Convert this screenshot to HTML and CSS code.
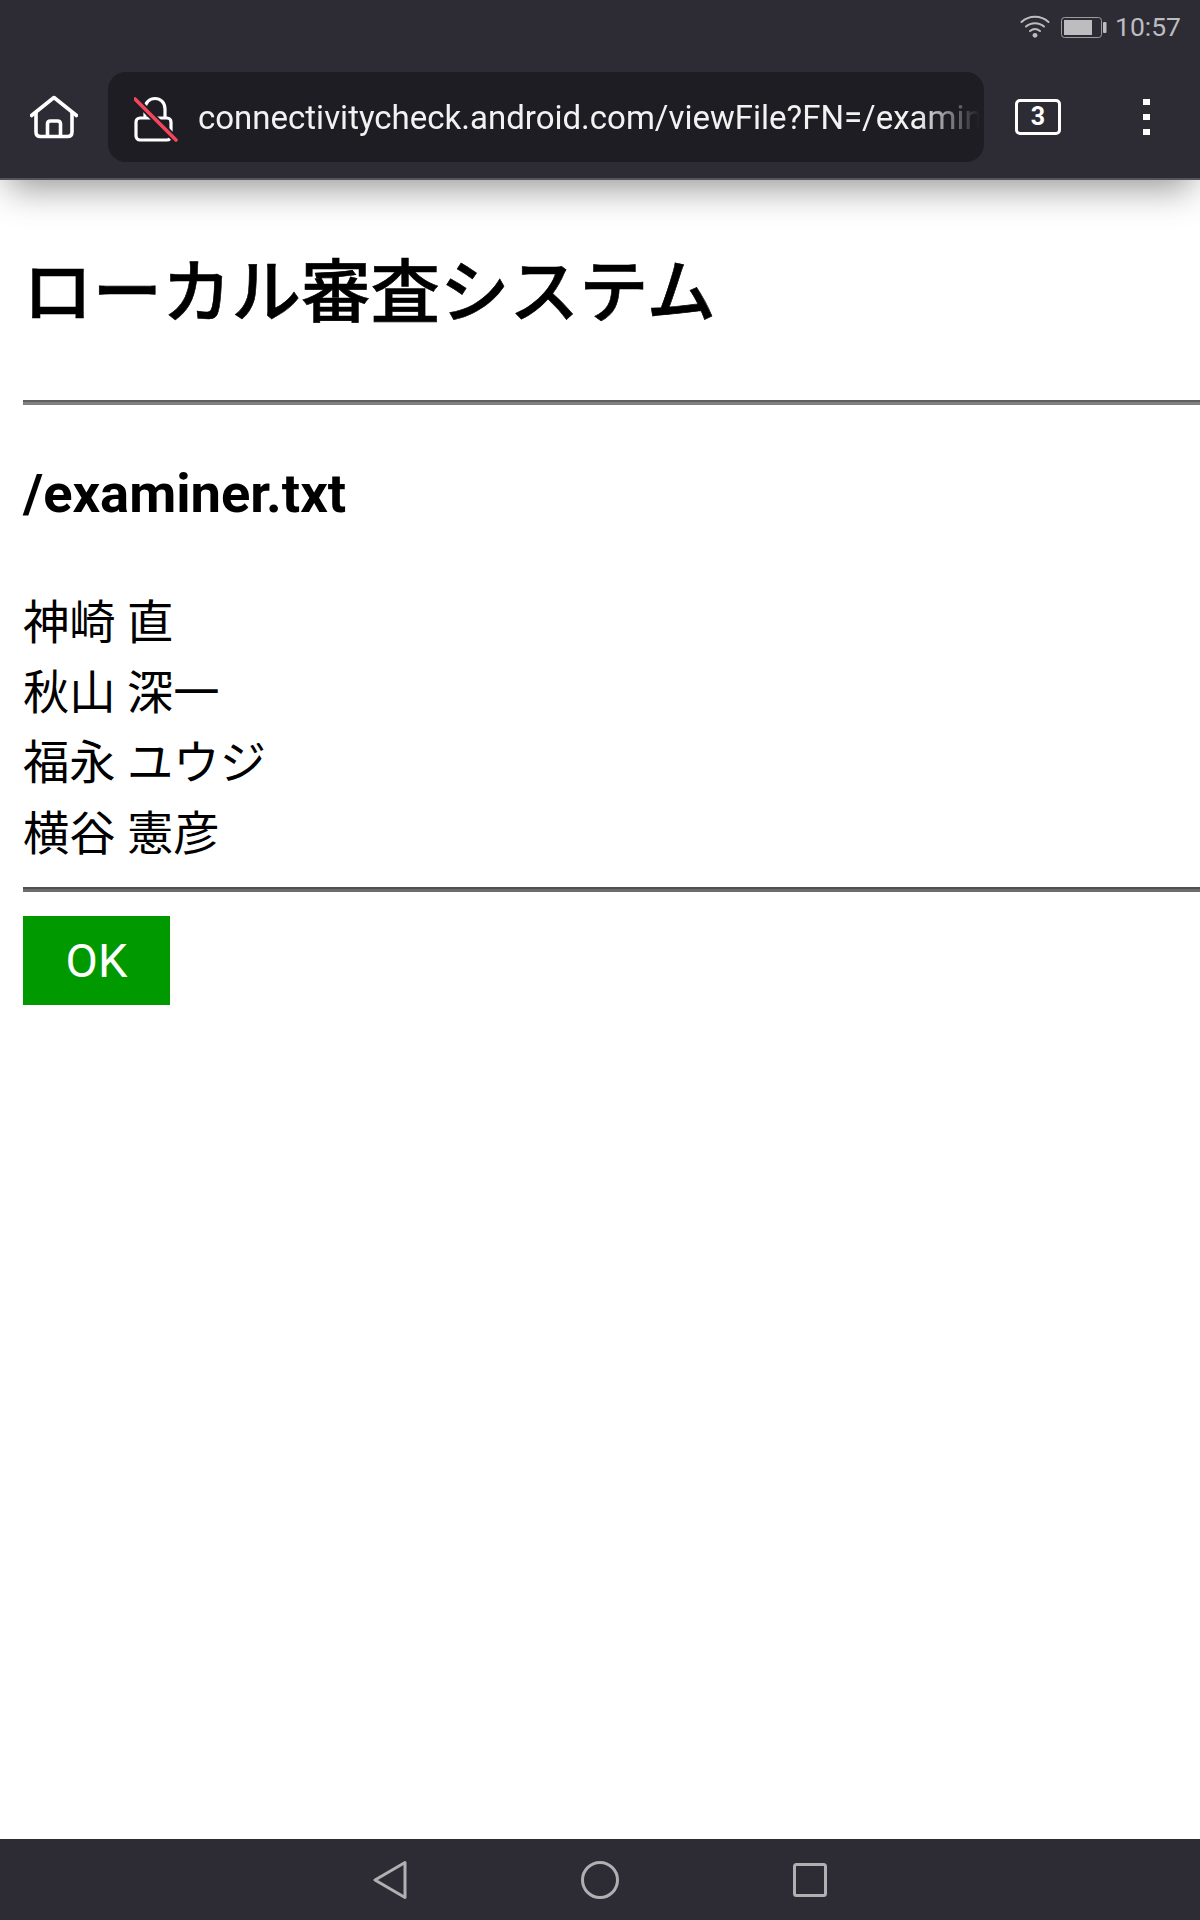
FILE: index.html
```html
<!DOCTYPE html>
<html lang="ja">
<head>
<meta charset="utf-8">
<title>ローカル審査システム</title>
<link rel="stylesheet" href="styles.css">
</head>
<body>
<div class="screen">
  <header class="chrome">
    <div class="status">
      <svg class="wifi" viewBox="0 0 30 24" width="30" height="24" aria-hidden="true">
        <path d="M1.5 8 C9 1 21 1 28.5 8" fill="none" stroke="#bdbdc0" stroke-width="2" stroke-linecap="round"/>
        <path d="M6 12.5 C11 8 19 8 24 12.5" fill="none" stroke="#bdbdc0" stroke-width="2" stroke-linecap="round"/>
        <path d="M10 17 C13 14.5 17 14.5 20 17" fill="none" stroke="#bdbdc0" stroke-width="2" stroke-linecap="round"/>
        <circle cx="15" cy="21.3" r="2.4" fill="#bdbdc0"/>
      </svg>
      <svg class="battery" viewBox="0 0 46 22" width="46" height="22" aria-hidden="true">
        <rect x="0.5" y="0.5" width="40" height="20" rx="3" fill="none" stroke="#9d9da1" stroke-width="1"/>
        <rect x="3" y="3" width="28" height="15" fill="#bdbdc0"/>
        <rect x="42" y="5" width="3.5" height="11" rx="1" fill="#bdbdc0"/>
      </svg>
      <span class="clock">10:57</span>
    </div>
    <div class="toolbar">
      <svg class="home" viewBox="0 0 48 44" width="48" height="44" aria-hidden="true">
        <path d="M1.5 20.5 L24 2.5 L46.500 20.500" fill="none" stroke="#fff" stroke-width="3.600" stroke-linecap="round" stroke-linejoin="round"/>
        <path d="M6 17 V37 Q6 41.500 10.500 41.500 H37.500 Q42 41.500 42 37 V17" fill="none" stroke="#fff" stroke-width="3.600"/>
        <path d="M17.500 41 V29 Q17.500 26 20.500 26 H27.500 Q30.500 26 30.500 29 V41" fill="none" stroke="#fff" stroke-width="3.600"/>
      </svg>
      <div class="address">
        <svg class="lock" viewBox="0 0 44 46" width="44" height="46" aria-hidden="true">
          <path d="M11 24 V13 C11 -1 31 -1 31 13 V24" fill="none" stroke="#fff" stroke-width="3.200"/>
          <rect x="2" y="22" width="35" height="22" rx="4" fill="#1e1d23" stroke="#fff" stroke-width="3.200"/>
          <path d="M1 3 L42 44" stroke="#1e1d23" stroke-width="7"/>
          <path d="M1 3 L42 44" stroke="#f4455c" stroke-width="3.600" stroke-linecap="round"/>
        </svg>
        <div class="url">connectivitycheck.android.com/viewFile?FN=/examiner.txt</div>
      </div>
      <div class="tabs">3</div>
      <div class="menu"><i></i><i></i><i></i></div>
    </div>
  </header>
  <main class="page">
    <h1 class="title">ローカル審査システム</h1>
    <hr class="rule">
    <h2 class="file">/examiner.txt</h2>
    <div class="names">
      <div>神崎 直</div>
      <div>秋山 深一</div>
      <div>福永 ユウジ</div>
      <div>横谷 憲彦</div>
    </div>
    <hr class="rule rule-dark">
    <button class="ok" type="button">OK</button>
  </main>
  <nav class="navbar">
    <svg viewBox="0 0 34 40" width="34" height="40" aria-hidden="true">
      <path d="M32 2.500 L2 20 L32 37.500 Z" fill="none" stroke="#b0b0b2" stroke-width="3" stroke-linejoin="round"/>
    </svg>
    <svg viewBox="0 0 38 38" width="38" height="38" aria-hidden="true">
      <circle cx="19" cy="19" r="17.500" fill="none" stroke="#b0b0b2" stroke-width="3"/>
    </svg>
    <svg viewBox="0 0 34 34" width="34" height="34" aria-hidden="true">
      <rect x="1.500" y="1.500" width="31" height="31" rx="2" fill="none" stroke="#b0b0b2" stroke-width="3"/>
    </svg>
  </nav>
</div>
</body>
</html>
```
FILE: styles.css
```css
* { box-sizing: border-box; }
html, body { margin: 0; padding: 0; }
body {
  width: 1200px;
  height: 1920px;
  overflow: hidden;
  background: #fff;
  font-family: Roboto, "Noto Sans CJK JP", sans-serif;
  color: #000;
}
.screen { display: flex; flex-direction: column; height: 1920px; }

.chrome {
  height: 180px;
  flex: none;
  background: #2d2c35;
  border-bottom: 2px solid #55545d;
  box-shadow: 0 16px 34px -8px rgba(0, 0, 0, 0.42);
  position: relative;
}
.status {
  height: 72px;
  display: flex;
  align-items: flex-start;
  justify-content: flex-end;
  padding: 14px 19px 0 0;
  color: #bdbdc0;
}
.wifi { margin-right: 11px; }
.battery { margin: 3px 8px 0 0; }
.clock { font-size: 26.500px; line-height: 26px; }

.toolbar { display: flex; align-items: flex-start; height: 90px; padding-left: 30px; }
.home { margin-top: 23px; flex: none; }
.address {
  width: 876px;
  height: 90px;
  margin-left: 30px;
  flex: none;
  background: #1e1d23;
  border-radius: 18px;
  display: flex;
  align-items: center;
  padding: 0 4px 0 26px;
  overflow: hidden;
}
.lock { flex: none; margin: 3px 0 0 0; }
.url {
  margin-left: 20px;
  padding-top: 2px;
  font-size: 33px;
  line-height: 44px;
  color: #f2f2f3;
  white-space: nowrap;
  overflow: hidden;
  flex: 1;
  -webkit-mask-image: linear-gradient(to right, #000 92%, transparent 100%);
  mask-image: linear-gradient(to right, #000 92%, transparent 100%);
}
.tabs {
  flex: none;
  width: 46px;
  height: 36px;
  margin: 27px 0 0 31px;
  border: 3px solid #fff;
  border-radius: 5px;
  color: #fff;
  font-size: 25px;
  font-weight: 700;
  line-height: 30px;
  text-align: center;
}
.menu {
  flex: none;
  margin: 27px 0 0 82px;
  width: 7px;
  display: flex;
  flex-direction: column;
  gap: 9px;
}
.menu i { display: block; width: 7px; height: 6px; background: #fff; }

.page { flex: 1; padding: 0 0 0 23px; overflow: hidden; }
.title {
  margin: 74px 0 0;
  font-size: 69.500px;
  line-height: 80px;
  font-weight: 500;
  -webkit-text-stroke: 0.6px #000;
}
.rule {
  height: 5px;
  margin: 66px 0 0;
  border: 0;
  border-top: 2px solid #5f5f5f;
  border-bottom: 3px solid #808080;
}
.rule-dark { margin-top: 0; border-top-color: #4f4f4f; border-bottom-color: #6c6c6c; }
.file {
  margin: 59px 0 0;
  font-size: 54.300px;
  line-height: 60px;
  font-weight: 700;
}
.names { margin-top: 64px; font-size: 46.300px; line-height: 70.200px; padding-bottom: 18px; }
.ok {
  display: block;
  width: 147px;
  height: 89px;
  margin: 24px 0 0;
  padding: 0;
  border: 0;
  background: #009900;
  color: #fff;
  font-family: Roboto, sans-serif;
  font-size: 47px;
}

.navbar {
  flex: none;
  height: 81px;
  background: #2d2c35;
  display: flex;
  align-items: center;
  justify-content: center;
  gap: 174px;
}
```
